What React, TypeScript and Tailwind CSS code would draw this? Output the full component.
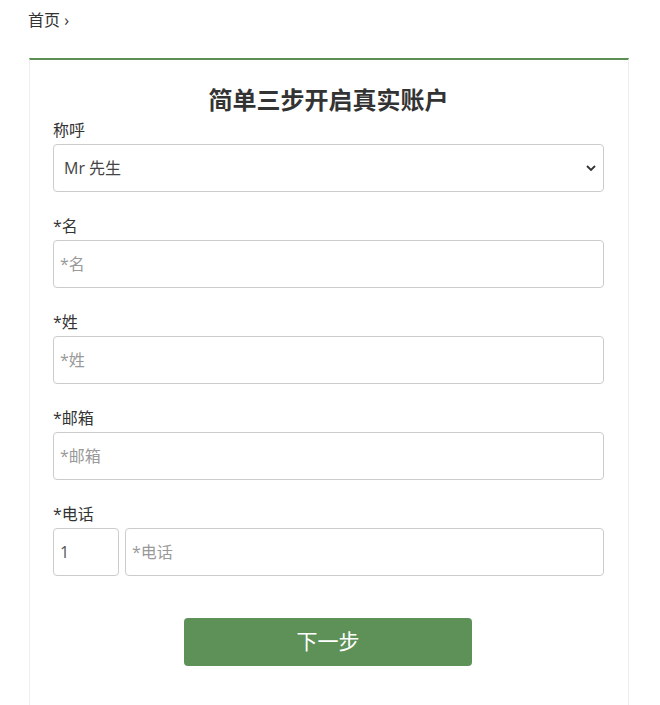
import React from "react";

const font = { fontFamily: '"Open Sans", "Noto Sans CJK SC", sans-serif' };

function Field({ label, placeholder }: { label: string; placeholder: string }) {
  return (
    <div className="mt-[24px]">
      <div className="text-[16px] leading-[20px] text-[#333]">{label}</div>
      <input
        className="mt-[4px] block w-full h-[48px] rounded-[4px] border border-[#ccc] bg-white pl-[6px] text-[16px] text-[#555] placeholder:text-[#999] outline-none"
        placeholder={placeholder}
      />
    </div>
  );
}

export default function App() {
  return (
    <div className="min-h-[705px] bg-white" style={font}>
      <div className="pl-[28px] pt-[8px] text-[16px] leading-[24px] text-[#333]">首页 ›</div>
      <div className="ml-[29px] mt-[26px] w-[600px] min-h-[647px] border-t-2 border-t-[#5c8f53] border-x border-x-[#eee] pl-[23px] pr-[24px] pt-[25px] pb-[40px]">
        <h1 className="text-center text-[24px] leading-[30px] font-bold text-[#333]">简单三步开启真实账户</h1>
        <div className="mt-[5px]">
          <div className="text-[16px] leading-[20px] text-[#333]">称呼</div>
          <div className="relative mt-[4px]">
            <select className="block w-full h-[48px] appearance-none rounded-[4px] border border-[#ccc] bg-white pl-[10px] text-[16px] text-[#444] outline-none">
              <option>Mr 先生</option>
              <option>Ms 女士</option>
            </select>
            <svg className="pointer-events-none absolute right-[7px] top-[19px]" width="12" height="10" viewBox="0 0 12 10">
              <path d="M2 3 L6 7 L10 3" fill="none" stroke="#333" strokeWidth="1.8" />
            </svg>
          </div>
        </div>
        <Field label="*名" placeholder="*名" />
        <Field label="*姓" placeholder="*姓" />
        <Field label="*邮箱" placeholder="*邮箱" />
        <div className="mt-[24px]">
          <div className="text-[16px] leading-[20px] text-[#333]">*电话</div>
          <div className="mt-[4px] flex gap-[6px]">
            <input
              defaultValue="1"
              className="block w-[66px] h-[48px] rounded-[4px] border border-[#ccc] bg-white pl-[6px] text-[16px] text-[#555] outline-none"
            />
            <input
              placeholder="*电话"
              className="block flex-1 min-w-0 h-[48px] rounded-[4px] border border-[#ccc] bg-white pl-[6px] text-[16px] text-[#555] placeholder:text-[#999] outline-none"
            />
          </div>
        </div>
        <button className="ml-[131px] mt-[42px] block w-[288px] h-[48px] rounded-[4px] bg-[#5e9158] text-[21px] text-white">下一步</button>
      </div>
    </div>
  );
}
